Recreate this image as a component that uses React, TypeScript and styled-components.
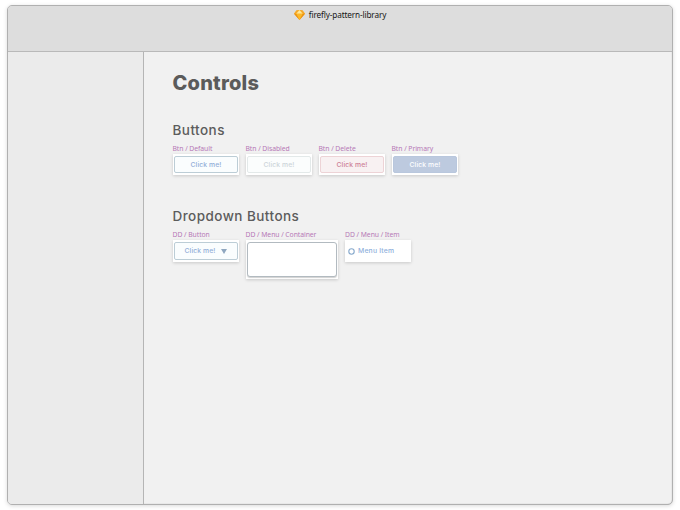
import React from 'react';
import styled, { createGlobalStyle } from 'styled-components';

const Global = createGlobalStyle`
  * { box-sizing: border-box; }
  body { margin: 0; background: #fff; overflow: hidden; }
`;

const Page = styled.div`
  width: 680px;
  height: 510px;
  padding: 5px 8px;
`;

const Window = styled.div`
  width: 666px;
  height: 500px;
  margin-left: -1px;
  display: flex;
  flex-direction: column;
  border: 1px solid #b0b0b0;
  border-radius: 5px;
  overflow: hidden;
  background: #f1f1f1;
  box-shadow: inset 0 0 1px #999, 0 1px 4px rgba(0, 0, 0, 0.15);
`;

const Toolbar = styled.header`
  height: 46px;
  flex: none;
  display: flex;
  justify-content: center;
  align-items: flex-start;
  gap: 4px;
  padding: 2px 0 0;
  background: #ddd;
  border-bottom: 1px solid #b9b9b9;
  font: 8.2px/14px 'Noto Sans', sans-serif;
  color: #151515;
`;

const Title = styled.span`
  letter-spacing: -0.13px;
`;

const Body = styled.div`
  display: flex;
  flex: 1;
`;

const Sidebar = styled.aside`
  width: 136px;
  flex: none;
  background: #ebebeb;
  border-right: 1px solid #b5b5b5;
`;

const Canvas = styled.main`
  flex: 1;
  padding: 18px 0 0 28.5px;
`;

const Heading = styled.h1`
  margin: 0;
  font: 800 20px/26px Inter, sans-serif;
  letter-spacing: 0.2px;
  color: #5b5b5b;
`;

const Section = styled.section<{ $top: number }>`
  margin-top: ${(p) => p.$top}px;
`;

const SectionTitle = styled.h2`
  margin: 0;
  font: 500 13.5px/18px Inter, sans-serif;
  letter-spacing: 0.45px;
  color: #5c5c5c;
`;

const Samples = styled.div`
  display: flex;
  align-items: flex-start;
  gap: 6px;
  margin-top: 4px;
`;

const Sample = styled.div<{ $width: number }>`
  width: ${(p) => p.$width}px;
`;

const Label = styled.div`
  height: 11px;
  font: 6.8px/12px 'Noto Sans', sans-serif;
  letter-spacing: -0.05px;
  color: #b678b6;
  white-space: nowrap;
`;

const Artboard = styled.div<{ $width: number; $height: number }>`
  width: ${(p) => p.$width}px;
  height: ${(p) => p.$height}px;
  padding: 2px 1px;
  background: #fff;
  box-shadow: 0 1px 3px rgba(0, 0, 0, 0.17);
`;

const tones = {
  normal: { bg: '#fafdfe', border: '#bccdd6', text: '#92add8' },
  disabled: { bg: '#fbfdfd', border: '#e3e9e9', text: '#ccd4d9' },
  danger: { bg: '#f8f1f2', border: '#edd3d6', text: '#cd7f96' },
  primary: { bg: '#bdcadf', border: '#b9c7dd', text: '#ffffff' },
};

const Button = styled.div<{ $tone: keyof typeof tones }>`
  height: 100%;
  display: flex;
  align-items: center;
  justify-content: center;
  gap: 6px;
  padding-left: 1px;
  border: 1px solid ${(p) => tones[p.$tone].border};
  border-radius: 2px;
  background: ${(p) => tones[p.$tone].bg};
  color: ${(p) => tones[p.$tone].text};
  font: 500 6.8px/10px Inter, sans-serif;
  letter-spacing: 0.1px;
`;

const MenuBox = styled.div`
  height: 35px;
  border: 1px solid #b2bac0;
  border-radius: 3px;
  background: #fff;
  box-shadow: 0 1px 1px rgba(0, 0, 0, 0.18);
`;

const MenuItem = styled.div`
  height: 100%;
  display: flex;
  align-items: center;
  gap: 3px;
  padding-left: 2px;
  color: #8fb0dc;
  font: 500 6.8px/10px Inter, sans-serif;
  letter-spacing: 0.2px;
`;

const GemIcon = styled.svg`
  margin-top: 2px;
`;

const Gem = () => (
  <GemIcon width="11" height="10" viewBox="0 0 11 10">
    <path d="M2.4.4 5.5 0l3.1.4L11 3.7 5.5 10 0 3.7Z" fill="#f8a81b" />
    <path d="M2.4.4 5.5 0 2.2 3.7H0ZM8.6.4 5.5 0l3.3 3.7H11Z" fill="#f5a92a" />
    <path d="M5.5 0 8.8 3.7H2.2Z" fill="#ffe89a" />
    <path d="M2.2 3.7h6.6L5.5 10Z" fill="#fdb827" />
    <path d="M0 3.7h2.2L5.5 10ZM11 3.7H8.8L5.5 10Z" fill="#e99113" />
  </GemIcon>
);

const samples: { label: string; tone: keyof typeof tones }[] = [
  { label: 'Btn / Default', tone: 'normal' },
  { label: 'Btn / Disabled', tone: 'disabled' },
  { label: 'Btn / Delete', tone: 'danger' },
  { label: 'Btn / Primary', tone: 'primary' },
];

export default function App() {
  return (
    <Page>
      <Global />
      <Window>
        <Toolbar>
          <Gem />
          <Title>firefly-pattern-library</Title>
        </Toolbar>
        <Body>
          <Sidebar />
          <Canvas>
            <Heading>Controls</Heading>
            <Section $top={25}>
              <SectionTitle>Buttons</SectionTitle>
              <Samples>
                {samples.map((s) => (
                  <Sample key={s.label} $width={67}>
                    <Label>{s.label}</Label>
                    <Artboard $width={66} $height={21}>
                      <Button $tone={s.tone}>Click me!</Button>
                    </Artboard>
                  </Sample>
                ))}
              </Samples>
            </Section>
            <Section $top={32}>
              <SectionTitle>Dropdown Buttons</SectionTitle>
              <Samples>
                <Sample $width={67}>
                  <Label>DD / Button</Label>
                  <Artboard $width={66} $height={22}>
                    <Button $tone="normal">
                      Click me!
                      <svg width="6" height="5" viewBox="0 0 6 5">
                        <path d="M0 0h6L3 5Z" fill="#8fa7c0" />
                      </svg>
                    </Button>
                  </Artboard>
                </Sample>
                <Sample $width={93.5}>
                  <Label>DD / Menu / Container</Label>
                  <Artboard $width={92} $height={39}>
                    <MenuBox />
                  </Artboard>
                </Sample>
                <Sample $width={67}>
                  <Label>DD / Menu / Item</Label>
                  <Artboard $width={66} $height={22}>
                    <MenuItem>
                      <svg width="7" height="7" viewBox="0 0 7 7">
                        <circle cx="3.5" cy="3.5" r="2.7" fill="none" stroke="#87a9cc" strokeWidth="1.1" />
                      </svg>
                      Menu Item
                    </MenuItem>
                  </Artboard>
                </Sample>
              </Samples>
            </Section>
          </Canvas>
        </Body>
      </Window>
    </Page>
  );
}
